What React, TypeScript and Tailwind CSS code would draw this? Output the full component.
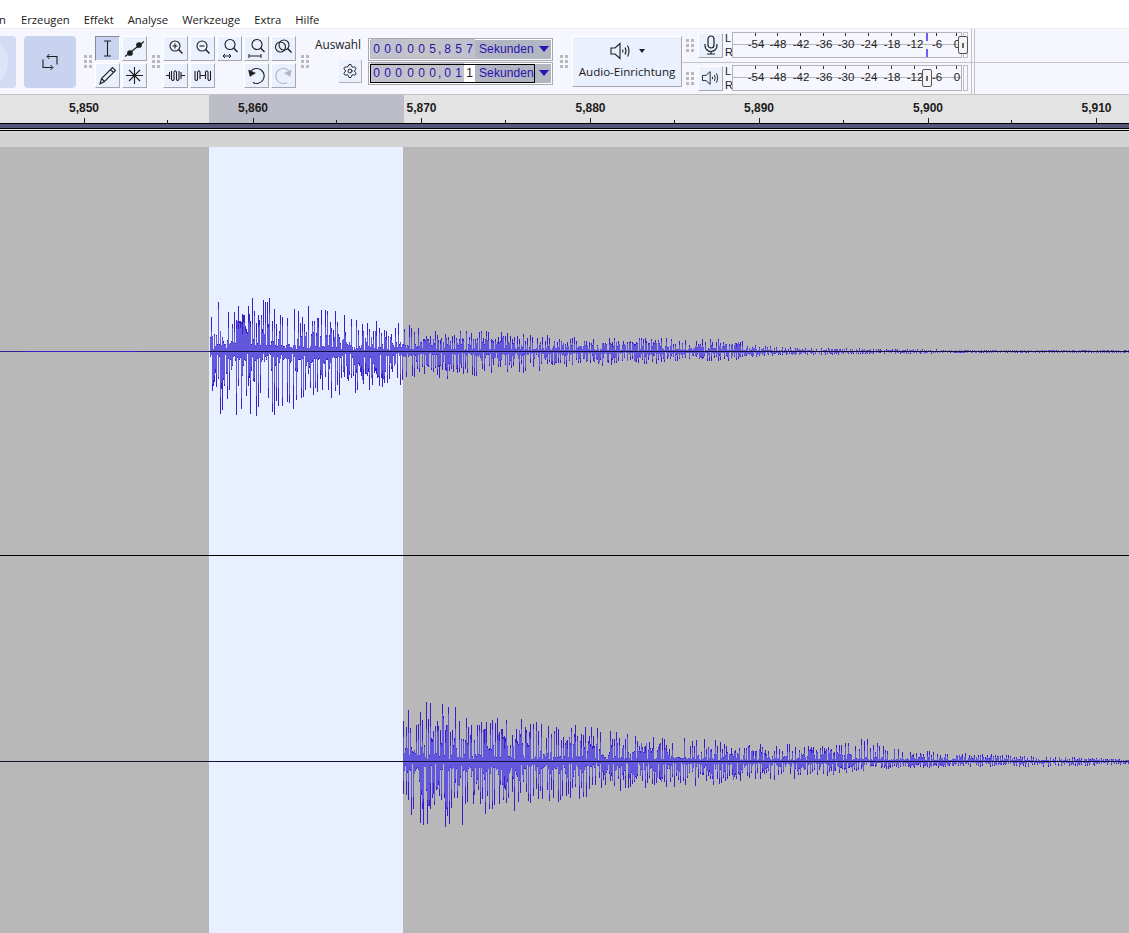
import { Settings } from "lucide-react";
import type { ReactNode } from "react";

const menuItems = ["Erzeugen", "Effekt", "Analyse", "Werkzeuge", "Extra", "Hilfe"];
const rulerMajor = [
  { label: "5,850", x: 83.5 },
  { label: "5,860", x: 252.5 },
  { label: "5,870", x: 421 },
  { label: "5,880", x: 590 },
  { label: "5,890", x: 758.5 },
  { label: "5,900", x: 927.5 },
  { label: "5,910", x: 1096 },
];
const rulerMinor = [167, 336, 505, 674, 843, 1011];
const meterLabels = [
  { label: "-54", x: 23 },
  { label: "-48", x: 45 },
  { label: "-42", x: 68 },
  { label: "-36", x: 91 },
  { label: "-30", x: 113 },
  { label: "-24", x: 136 },
  { label: "-18", x: 159 },
  { label: "-12", x: 182 },
  { label: "-6", x: 204 },
  { label: "0", x: 224 },
];

// small seeded random so the wave form looks the same every time
function makeRandom(seed: number) {
  let s = seed;
  return () => {
    s = (s + 0x6d2b79f5) | 0;
    let t = Math.imul(s ^ (s >>> 15), 1 | s);
    t = (t + Math.imul(t ^ (t >>> 7), 61 | t)) ^ t;
    return ((t ^ (t >>> 14)) >>> 0) / 4294967296;
  };
}

function lerp(points: number[][], x: number) {
  for (let i = 1; i < points.length; i++) {
    if (x <= points[i][0]) {
      const [x0, y0] = points[i - 1];
      const [x1, y1] = points[i];
      return y0 + ((y1 - y0) * (x - x0)) / (x1 - x0);
    }
  }
  return points[points.length - 1][1];
}

function buildWave(seed: number, center: number, up: number[][], down: number[][]) {
  const random = makeRandom(seed);
  let peak = "";
  let rms = "";
  let slowUp = 0.5;
  let slowDown = 0.5;
  let spikeUp = false;
  let spikeDown = false;
  const sample = (spike: boolean, amp: number, slow: number) => {
    if (spike) return Math.round(amp * (0.5 + 0.5 * random()));
    if (random() < 0.4) return Math.round(amp * (0.03 + 0.12 * random()));
    return Math.round(amp * slow * (0.45 + 0.55 * random()));
  };
  const inner = (spike: boolean, v: number) =>
    Math.round(v * (spike ? 0.45 + 0.45 * random() : 0.8 + 0.2 * random()));
  for (let x = up[0][0]; x < 1129; x++) {
    slowUp = Math.min(0.8, Math.max(0.15, slowUp + (random() - 0.5) * 0.35));
    slowDown = Math.min(0.8, Math.max(0.15, slowDown + (random() - 0.5) * 0.35));
    spikeUp = !spikeUp && random() < 0.45;
    spikeDown = !spikeDown && random() < 0.45;
    const top = sample(spikeUp, lerp(up, x), slowUp);
    const bottom = sample(spikeDown, lerp(down, x), slowDown);
    const px = x + 0.5;
    peak += `M${px} ${center - top}V${center + bottom + 1}`;
    rms += `M${px} ${center - inner(spikeUp, top)}V${center + inner(spikeDown, bottom) + 1}`;
  }
  return { peak, rms };
}

const topWave = buildWave(
  11,
  204,
  [[210, 36], [214, 52], [245, 56], [270, 54], [300, 48], [350, 38], [400, 30], [430, 21], [490, 21], [560, 15], [650, 13], [740, 12], [760, 5], [800, 4], [900, 2], [1000, 1], [1129, 1]],
  [[210, 50], [216, 66], [262, 68], [300, 55], [350, 42], [400, 34], [430, 28], [490, 24], [560, 17], [650, 12], [740, 9], [760, 4], [800, 3], [900, 2], [1000, 1], [1129, 1]],
);
const bottomWave = buildWave(
  29,
  205,
  [[403, 58], [420, 60], [450, 56], [490, 50], [540, 38], [600, 34], [650, 25], [700, 23], [760, 18], [830, 16], [870, 24], [885, 14], [950, 9], [1050, 5], [1129, 2]],
  [[403, 48], [420, 64], [460, 66], [500, 52], [550, 44], [600, 32], [650, 26], [700, 26], [760, 20], [830, 14], [880, 7], [950, 6], [1050, 5], [1129, 3]],
);

const Grip = () => (
  <div className="grid shrink-0 grid-cols-[3px_3px] gap-[2px]">
    {[0, 1, 2, 3, 4, 5].map((i) => (
      <div key={i} className="h-[3px] w-[3px] bg-[#b9b9bd]" />
    ))}
  </div>
);

const ToolButton = ({ active, children }: { active?: boolean; children: ReactNode }) => (
  <div
    className={
      active
        ? "flex h-[25px] w-[25px] items-center justify-center border border-b-white border-l-[#8a8a92] border-r-white border-t-[#8a8a92] bg-[#c8d4ef]"
        : "flex h-[25px] w-[25px] items-center justify-center border border-b-[#a6a6ac] border-l-white border-r-[#a6a6ac] border-t-white bg-[#eaf0fe]"
    }
  >
    {children}
  </div>
);

const Icon = ({ children, color = "#1e1e1e" }: { children: ReactNode; color?: string }) => (
  <svg width="23" height="23" viewBox="1 1 23 23" fill="none" stroke={color} strokeWidth="1.1" className="block">
    {children}
  </svg>
);

const Magnifier = ({ cx = 12, cy = 10, r = 5 }: { cx?: number; cy?: number; r?: number }) => (
  <>
    <circle cx={cx} cy={cy} r={r} />
    <path d={`M${cx + r * 0.72} ${cy + r * 0.72}L${cx + r + 2.5} ${cy + r + 2.5}`} strokeWidth="1.4" />
  </>
);

const Speaker = () => (
  <svg width="22" height="18" viewBox="0 0 22 18" fill="none" stroke="#1e1e1e" strokeWidth="1.1" className="block">
    <path d="M1 6H5L10 1.5V16.5L5 12H1Z" />
    <path d="M12.5 7.5Q13.5 9 12.5 10.5M15 5.5Q17 9 15 12.5M17.5 3.5Q20.5 9 17.5 14.5" />
  </svg>
);

const Digit = ({ children, active }: { children: ReactNode; active?: boolean }) => (
  <span className={active ? "flex h-full w-[11px] items-center justify-center bg-white text-[#222]" : "w-[11px] text-center"}>{children}</span>
);

const TimeField = ({ groups, focused }: { groups: string[]; focused?: boolean }) => (
  <div className="relative flex h-[23px] w-[185px] border border-[#a9a9ad] bg-white p-[1px]">
    <div className="flex h-full w-full items-center bg-[#b2b5c2] pb-[2px] font-['Liberation_Sans',sans-serif] text-[12px] leading-none text-[#2a12ae]">
      <div className="ml-[1px] flex h-[19px] w-[34px] items-center bg-[#c0c1cc]">
        {groups[0].split("").map((d, i) => (
          <Digit key={i}>{d}</Digit>
        ))}
      </div>
      <div className="flex h-[19px] w-[33px] items-center bg-[#c4c4c6]">
        {groups[1].split("").map((d, i) => (
          <Digit key={i}>{d}</Digit>
        ))}
      </div>
      <div className="flex h-[19px] w-[37px] items-center bg-[#c0c1cc]">
        <span className="w-[4px]">,</span>
        {groups[2].split("").map((d, i) => (
          <Digit key={i} active={focused && i === 2}>
            {d}
          </Digit>
        ))}
      </div>
      <span className="ml-[4px] tracking-[0.1px]">Sekunden</span>
      <span className="ml-auto mr-[2px] h-0 w-0 border-x-[5px] border-t-[6px] border-x-transparent border-t-[#2a12ae]" />
    </div>
    {focused && <div className="absolute left-[1px] top-[1px] h-[19px] w-[165px] border border-black" />}
  </div>
);

const Meter = ({ handleX, handleTop, peakX }: { handleX: number; handleTop: number; peakX?: number }) => (
  <div className="relative h-[26px] w-[230px] shrink-0 border border-[#b4b4b8] bg-[#f5f6fe]">
    <div className="absolute left-0 right-0 top-[11px] h-[1px] bg-[#b8b8b8]" />
    {meterLabels.map((m) => (
      <div key={m.label} className="absolute top-0 h-[3px] w-[1px] bg-[#333]" style={{ left: m.x - 1 }} />
    ))}
    {meterLabels.map((m) => (
      <span
        key={m.label}
        className="absolute top-[5px] -translate-x-1/2 font-['Liberation_Sans',sans-serif] text-[11.5px] leading-[13px] text-[#222]"
        style={{ left: m.x }}
      >
        {m.label}
      </span>
    ))}
    {peakX !== undefined && (
      <>
        <div className="absolute top-0 h-[8px] w-[2px] bg-[#6a60f0]" style={{ left: peakX }} />
        <div className="absolute top-[16px] h-[8px] w-[2px] bg-[#6a60f0]" style={{ left: peakX }} />
      </>
    )}
    <div
      className="absolute flex h-[18px] w-[10px] items-center justify-center rounded-[2px] border border-[#555] bg-[#f4f4f6]"
      style={{ left: handleX, top: handleTop }}
    >
      <div className="h-[5px] w-[2px] bg-[#666]" />
    </div>
  </div>
);

const MeterRow = ({
  icon,
  handleX,
  handleTop,
  peakX,
  bordered,
}: {
  icon: ReactNode;
  handleX: number;
  handleTop: number;
  peakX?: number;
  bordered?: boolean;
}) => (
  <div className={bordered ? "flex h-[34px] items-center border-b border-[#c4c4c8] pl-[4px]" : "flex h-[32px] items-center pl-[4px]"}>
    <Grip />
    <div className="ml-[4px] flex h-[25px] w-[25px] items-center justify-center border border-b-[#a6a6ac] border-l-white border-r-[#a6a6ac] border-t-white bg-[#eaf0fe]">
      {icon}
    </div>
    <div className="ml-[2px] flex w-[7px] flex-col font-['Liberation_Sans',sans-serif] text-[11px] leading-[14px] text-[#222]">
      <span>L</span>
      <span>R</span>
    </div>
    <Meter handleX={handleX} handleTop={handleTop} peakX={peakX} />
    <div className="ml-[1px] h-[26px] w-[5px] border border-[#c0c0c4]" />
    <div className="ml-[3px] h-full w-[4px] border-x border-[#c4c4c8]" />
  </div>
);

export default function App() {
  return (
    <div className="flex h-[933px] w-[1129px] flex-col overflow-hidden bg-white font-['Open_Sans',sans-serif]">
      {/* Menu */}
      <div className="flex h-[28px] items-end text-[11.25px] leading-[16px] text-[#1a1a1a]">
        <span className="ml-[-1px] w-[22px]">n</span>
        <div className="flex gap-[14px]">
          {menuItems.map((item) => (
            <span key={item}>{item}</span>
          ))}
        </div>
      </div>

      {/* Toolbars */}
      <div className="flex h-[67px] items-center border-b border-t border-b-[#c2c2c2] border-t-[#ececee] bg-[#f5f6fe]">
        <div className="relative h-[52px] w-[16px] shrink-0 overflow-hidden rounded-r-[4px] bg-[#d2dbf3]">
          <div className="absolute left-[-46px] top-[-1px] h-[54px] w-[54px] rounded-full bg-[#dde4f8]" />
        </div>
        <div className="ml-[8px] flex h-[52px] w-[52px] shrink-0 items-center justify-center rounded-[4px] bg-[#c8d4ef]">
          <svg width="16" height="18" viewBox="0 0 16 18" fill="none" stroke="#1e1e1e" strokeWidth="1.1" className="block">
            <path d="M5 3.5H15V11.5M1 6.5V14.5H10.5" />
            <path d="M7.5 1L5 3.5L7.5 6M8.5 12L11 14.5L8.5 17" strokeWidth="1" />
          </svg>
        </div>
        <div className="ml-[8px]">
          <Grip />
        </div>

        {/* Tools */}
        <div className="ml-[3px] grid shrink-0 grid-cols-[25px_25px] gap-[2px]">
          <ToolButton active>
            <Icon>
              <path d="M9 5H16M12.5 5V20M9 20H16" />
            </Icon>
          </ToolButton>
          <ToolButton>
            <Icon>
              <path d="M3 20.5L22 5.5" />
              <circle cx="8" cy="17" r="2.3" fill="#1e1e1e" />
              <circle cx="17" cy="9" r="2.3" fill="#1e1e1e" />
            </Icon>
          </ToolButton>
          <ToolButton>
            <Icon>
              <path d="M5 21L6.5 15.5L17.5 4.5L20.5 7.5L9.5 18.5ZM6.5 15.5L9.5 18.5M15.5 6.5L18.5 9.5" />
            </Icon>
          </ToolButton>
          <ToolButton>
            <Icon>
              <path d="M12.5 4V21M4 12.5H21M7 7L18 18M18 7L7 18" />
            </Icon>
          </ToolButton>
        </div>
        <div className="ml-[5px]">
          <Grip />
        </div>

        {/* Zoom and edit */}
        <div className="ml-[3px] grid shrink-0 grid-cols-[repeat(5,25px)] gap-[2px]">
          <ToolButton>
            <Icon>
              <Magnifier />
              <path d="M9.5 10H14.5M12 7.5V12.5" />
            </Icon>
          </ToolButton>
          <ToolButton>
            <Icon>
              <Magnifier />
              <path d="M9.5 10H14.5" />
            </Icon>
          </ToolButton>
          <ToolButton>
            <Icon>
              <Magnifier cx={13} cy={8.5} />
              <path d="M6 20H14M8 18L6 20L8 22M12 18L14 20L12 22" strokeWidth="1" />
            </Icon>
          </ToolButton>
          <ToolButton>
            <Icon>
              <Magnifier cx={13} cy={8.5} />
              <path d="M5 20H17M5 18V22M17 18V22" strokeWidth="1" />
            </Icon>
          </ToolButton>
          <ToolButton>
            <Icon>
              <circle cx="9.5" cy="11" r="5" />
              <Magnifier cx={13} cy={9} r={5} />
            </Icon>
          </ToolButton>
          <ToolButton>
            <Icon>
              <path d="M3 12.5H6.5M6.5 9V16M8.5 8V16.5Q10 18.5 11 16.5V9Q12 6.5 13.5 9V16.5Q14.5 18.5 16 16.5V8M18 9V16M18 12.5H22" />
            </Icon>
          </ToolButton>
          <ToolButton>
            <Icon>
              <path d="M5 8V16.5Q6.5 18.5 7.5 16.5V9Q9 6.5 10 9V16M10 12.5H15.5M15.5 16V9Q16.5 6.5 18 9V16.5Q19 18.5 20.5 16.5V8" />
            </Icon>
          </ToolButton>
          <div />
          <ToolButton>
            <Icon>
              <path d="M9 19.5A7.5 7.5 0 1 0 7 8L6 11" />
              <path d="M4.5 7L6 13.5L11.5 10Z" fill="#1e1e1e" strokeWidth="0.4" />
            </Icon>
          </ToolButton>
          <ToolButton>
            <Icon color="#b4b6bc">
              <path d="M16 19.5A7.5 7.5 0 1 1 18 8L19 11" />
              <path d="M20.5 7L19 13.5L13.5 10Z" fill="#b4b6bc" strokeWidth="0.4" />
            </Icon>
          </ToolButton>
        </div>
        <div className="ml-[5px]">
          <Grip />
        </div>

        {/* Selection */}
        <div className="ml-[6px] flex h-[52px] w-[47px] shrink-0 flex-col">
          <span className="text-[11.75px] leading-[16px] text-[#1a1a1a]">Auswahl</span>
          <div className="ml-auto mt-[8px] flex h-[23px] w-[23px] items-center justify-center border-b border-r border-b-[#b0b0b6] border-r-[#b0b0b6] bg-[#eaf0fe]">
            <Settings size={16} strokeWidth={1.5} color="#222" />
          </div>
        </div>
        <div className="ml-[6px] flex shrink-0 flex-col gap-[1px]">
          <TimeField groups={["000", "005", "857"]} />
          <TimeField groups={["000", "000", "011"]} focused />
        </div>
        <div className="ml-[7px]">
          <Grip />
        </div>

        {/* Audio setup */}
        <div className="ml-[4px] flex h-[51px] w-[110px] shrink-0 flex-col items-center border border-b-[#a6a6ac] border-l-white border-r-[#a6a6ac] border-t-white bg-[#eaf0fe] pt-[5px]">
          <div className="flex items-center gap-[7px]">
            <Speaker />
            <span className="h-0 w-0 border-x-[3px] border-t-[4px] border-x-transparent border-t-[#222]" />
          </div>
          <span className="mt-[4px] text-[11.6px] leading-[16px] text-[#1a1a1a]">Audio-Einrichtung</span>
        </div>

        {/* Meters */}
        <div className="flex h-full flex-1 flex-col">
          <MeterRow
            bordered
            handleX={225}
            handleTop={3}
            peakX={193}
            icon={
              <svg width="18" height="20" viewBox="0 0 18 20" fill="none" stroke="#1e1e1e" strokeWidth="1.2" className="block">
                <rect x="6" y="1" width="6" height="12" rx="3" />
                <path d="M3 9V10.5A6 6 0 0 0 15 10.5V9M9 16.5V19M5 19H13" />
              </svg>
            }
          />
          <MeterRow
            handleX={189}
            handleTop={3}
            icon={
              <div className="scale-[0.85]">
                <Speaker />
              </div>
            }
          />
        </div>
      </div>

      {/* Ruler */}
      <div className="relative h-[28px] shrink-0 bg-[#e3e3e4]">
        <div className="absolute bottom-0 left-[209px] top-0 w-[195px] bg-[#bdbdc7]" />
        {rulerMajor.map((t) => (
          <div key={t.label}>
            <span
              className="absolute top-[6px] -translate-x-1/2 font-['Liberation_Sans',sans-serif] text-[12px] font-bold leading-[14px] text-[#1c1c1c]"
              style={{ left: t.x + 0.5 }}
            >
              {t.label}
            </span>
            <div className="absolute bottom-0 h-[5px] w-[1px] bg-[#222]" style={{ left: t.x }} />
          </div>
        ))}
        {rulerMinor.map((x) => (
          <div key={x} className="absolute bottom-0 h-[3px] w-[1px] bg-[#222]" style={{ left: x }} />
        ))}
      </div>

      {/* Ruler band */}
      <div className="h-[1px] shrink-0 bg-black" />
      <div className="h-[4px] shrink-0 bg-[#55557a]" />
      <div className="h-[1px] shrink-0 bg-black" />
      <div className="h-[1px] shrink-0 bg-[#e8e8ee]" />
      <div className="h-[1px] shrink-0 bg-black" />
      <div className="h-[16px] shrink-0 bg-[#d3d3d3]" />

      {/* Track */}
      <div className="relative flex min-h-0 flex-1 flex-col bg-[#b8b8b8]">
        <div className="absolute bottom-0 left-[209px] top-0 w-[194px] bg-[#e8effe]" />
        <div className="relative h-[409px] shrink-0 border-b border-black">
          <svg width="1129" height="408" className="absolute left-0 top-0 block" shapeRendering="crispEdges">
            <path d="M0 204.5H26M137 204.5H209" stroke="#2c2290" strokeWidth="1" />
            <path d="M26 204.5H137" stroke="#3a22cc" strokeWidth="1" />
            <path d={topWave.peak} stroke="#3a1fc9" strokeWidth="1" />
            <path d={topWave.rms} stroke="#6358dc" strokeWidth="1" />
            <path d="M209 204.5H1129" stroke="#14103a" strokeWidth="1" />
          </svg>
        </div>
        <div className="relative flex-1">
          <svg width="1129" height="377" className="absolute left-0 top-0 block" shapeRendering="crispEdges">
            <path d={bottomWave.peak} stroke="#3a1fc9" strokeWidth="1" />
            <path d={bottomWave.rms} stroke="#6358dc" strokeWidth="1" />
            <path d="M0 205.5H1129" stroke="#14103a" strokeWidth="1" />
          </svg>
        </div>
      </div>
    </div>
  );
}
